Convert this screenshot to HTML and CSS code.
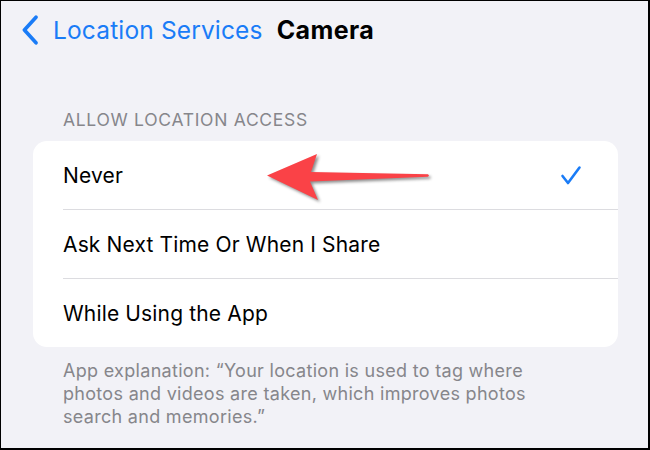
FILE: index.html
```html
<!DOCTYPE html>
<html lang="en">
<head>
<meta charset="utf-8">
<title>Camera</title>
<link rel="stylesheet" href="styles.css">
</head>
<body>
<div class="screen">
  <header class="nav">
    <a class="back" href="#">
      <svg class="chevron" width="18" height="30" viewBox="0 0 18 30">
        <path d="M15 2.2 L3.4 15 L15 27.8" fill="none" stroke="#1a7cf7" stroke-width="3.6" stroke-linecap="round" stroke-linejoin="round"/>
      </svg>
      <span class="back-label">Location Services</span>
    </a>
    <h1 class="title">Camera</h1>
  </header>

  <section class="group">
    <h2 class="group-header">ALLOW LOCATION ACCESS</h2>
    <ul class="card">
      <li class="row">
        <span class="row-label">Never</span>
        <svg class="arrow" width="180" height="60" viewBox="0 0 180 60">
          <polygon points="5,25.5 55,4 49,22 166,24.3 167,25.6 166,26.7 48,31.5 56,50" fill="#fa4247"/>
        </svg>
        <svg class="check" width="22" height="21" viewBox="0 0 22 21">
          <path d="M2.5 11 L8 18 L19.5 2.5" fill="none" stroke="#1a7cf7" stroke-width="2.6" stroke-linecap="round" stroke-linejoin="round"/>
        </svg>
      </li>
      <li class="row"><span class="row-label">Ask Next Time Or When I Share</span></li>
      <li class="row"><span class="row-label">While Using the App</span></li>
    </ul>
    <p class="group-footer">App explanation: “Your location is used to tag where photos and videos are taken, which improves photos search and memories.”</p>
  </section>
</div>
</body>
</html>
```

FILE: styles.css
```css
html, body {
  margin: 0;
  padding: 0;
  background: #000;
}

.screen {
  width: 647px;
  height: 447px;
  border-style: solid;
  border-color: #000;
  border-width: 1px 2px 2px 1px;
  background: #f2f2f7;
  font-family: Inter, "Liberation Sans", sans-serif;
  color: #000;
  overflow: hidden;
}

.nav {
  display: flex;
  align-items: center;
  height: 30px;
  padding: 14px 0 0 20px;
}

.back {
  display: flex;
  align-items: center;
  text-decoration: none;
  color: #1a7cf7;
}

.chevron {
  display: block;
  margin-right: 14px;
}

.back-label {
  font-size: 24.5px;
  letter-spacing: 0.15px;
}

.title {
  margin: 0 0 0 14px;
  font-size: 25px;
  font-weight: 700;
  letter-spacing: 0.4px;
}

.group {
  margin: 65px 30px 0 32px;
}

.group-header {
  margin: 0 0 11px 30px;
  font-size: 17.5px;
  font-weight: 400;
  color: #86868b;
  line-height: 20px;
  letter-spacing: 0.7px;
}

.card {
  list-style: none;
  margin: 0;
  padding: 0;
  background: #fff;
  border-radius: 14px;
}

.row {
  position: relative;
  display: flex;
  align-items: center;
  justify-content: space-between;
  height: 68px;
  margin-left: 30px;
  padding-right: 36px;
  border-bottom: 1px solid #dcdce0;
}

.row:last-child {
  border-bottom: none;
}

.row-label {
  font-size: 21px;
  letter-spacing: 0.15px;
}

.check {
  display: block;
}

.arrow {
  position: absolute;
  left: 199px;
  top: 9px;
  filter: drop-shadow(2px 2px 1.5px rgba(0, 0, 0, 0.45));
}

.group-footer {
  margin: 12px 60px 0 30px;
  font-size: 18px;
  line-height: 23px;
  color: #86868b;
  letter-spacing: 0.3px;
}
```
